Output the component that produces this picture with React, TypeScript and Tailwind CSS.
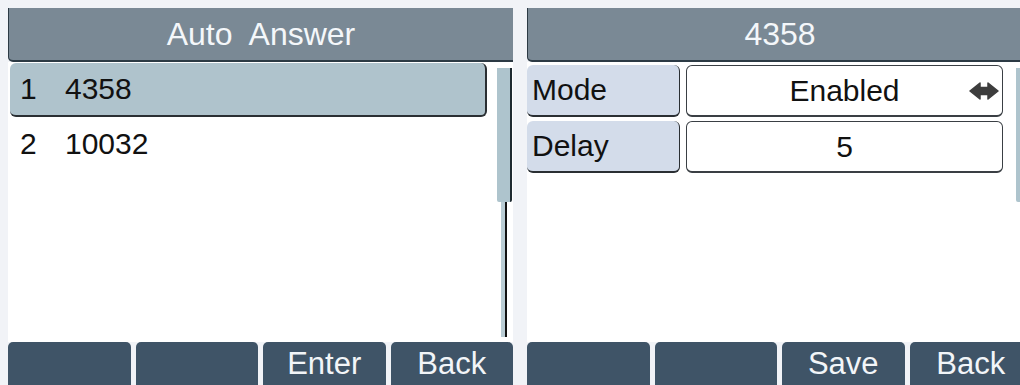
import React from 'react';

const font = "font-['Liberation_Sans',Arial,sans-serif]";

const Scrollbar: React.FC = () => (
  <div className="flex w-[16px] shrink-0 flex-col pt-[6px]">
    <div className="h-[134px] w-[15px] rounded-b-[2px] border-r-2 border-[#1e2a30] bg-[#aec4cd]" />
    <div className="ml-[4px] h-[135px] w-[6px] border-r-2 border-[#111] bg-[#b9ccd4]" />
  </div>
);

const SoftKeys: React.FC<{ keys: string[] }> = ({ keys }) => (
  <div className="flex h-[43px] gap-[5px]">
    {keys.map((k, i) => (
      <div
        key={i}
        className="flex flex-1 items-center justify-center rounded-t-[5px] bg-[#3f5467] text-[31px] leading-none text-[#f2f5f8]"
      >
        {k}
      </div>
    ))}
  </div>
);

const Screen: React.FC<{ title: string; keys: string[]; children: React.ReactNode }> = ({
  title,
  keys,
  children,
}) => (
  <div className="flex h-full w-[505px] shrink-0 flex-col">
    <div className="h-[8px]" />
    <div className="flex h-[54px] items-center justify-center whitespace-pre rounded-bl-[5px] border-b-2 border-l border-[#2c3a44] bg-[#7a8995] text-[32px] leading-none text-[#f4f7fa]">
      {title}
    </div>
    <div className="flex flex-1 bg-white">
      <div className="flex-1">{children}</div>
      <Scrollbar />
    </div>
    <SoftKeys keys={keys} />
  </div>
);

// bold two-headed arrow shown next to option values
const ArrowLR: React.FC = () => (
  <svg width="30" height="18" viewBox="0 0 30 18" className="text-[#3d3d3d]">
    <path
      d="M1 9 L11 1 L11 5.5 L19 5.5 L19 1 L29 9 L19 17 L19 12.5 L11 12.5 L11 17 Z"
      fill="currentColor"
      stroke="currentColor"
      strokeWidth="1.5"
      strokeLinejoin="round"
    />
  </svg>
);

export default function App() {
  const contacts = [
    { n: '1', v: '4358' },
    { n: '2', v: '10032' },
  ];

  return (
    <div className={`flex h-[385px] w-[1020px] gap-[14px] overflow-hidden bg-[#f1f3f7] pl-[8px] ${font}`}>
      <Screen title="Auto  Answer" keys={['', '', 'Enter', 'Back']}>
        <div className="ml-[2px] w-[477px] pt-px">
          {contacts.map((c, i) => (
            <div
              key={c.n}
              className={`flex h-[54px] items-center text-[30px] leading-none text-[#111] ${
                i === 0 ? 'rounded-[6px] border-b-2 border-r-2 border-[#2a2f33] bg-[#afc3cc]' : ''
              }`}
            >
              <span className="w-[55px] pl-[10px]">{c.n}</span>
              <span>{c.v}</span>
            </div>
          ))}
        </div>
      </Screen>

      <Screen title="4358" keys={['', '', 'Save', 'Back']}>
        <div className="flex flex-col gap-[4px] pt-[3px]">
          {[
            { label: 'Mode', value: 'Enabled', arrow: true },
            { label: 'Delay', value: '5', arrow: false },
          ].map((r) => (
            <div key={r.label} className="flex h-[52px] gap-[6px] text-[30px] leading-none text-[#111]">
              <div className="flex w-[153px] items-center rounded-[6px] border-b-2 border-r border-[#2a2f33] bg-[#d3dcea] pl-[5px]">
                {r.label}
              </div>
              <div className="relative flex w-[317px] items-center justify-center rounded-[6px] border border-b-2 border-[#3a3f44] bg-white">
                {r.value}
                {r.arrow && (
                  <div className="absolute right-[3px] top-1/2 -translate-y-1/2">
                    <ArrowLR />
                  </div>
                )}
              </div>
            </div>
          ))}
        </div>
      </Screen>
    </div>
  );
}
